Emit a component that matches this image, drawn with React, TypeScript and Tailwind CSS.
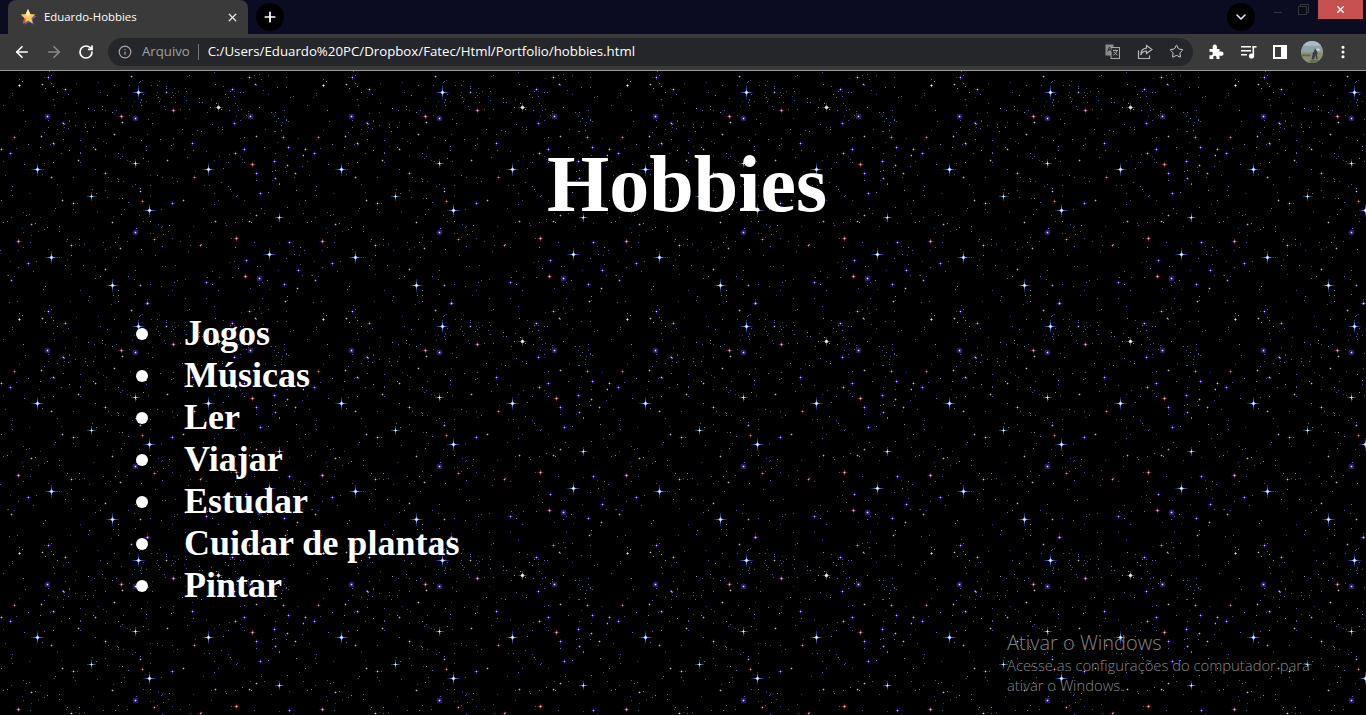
import React from "react";
import { X, Plus, ChevronDown, ArrowLeft, ArrowRight, RotateCw, Info, Star, MoreVertical } from "lucide-react";

type S = [number, number, string];
const stars: S[] = [
  [48,77,"p"],[131,76,"d"],[19,85,"c"],[42,84,"d"],[65,89,"p"],[138,92,"b"],[47,116,"h"],[121,116,"r"],[135,118,"h"],[63,123,"p"],[122,122,"d"],[114,134,"d"],[41,136,"d"],[14,137,"r2"],[53,143,"p"],[1,149,"p"],[10,153,"p"],[95,149,"d"],[78,160,"d"],[135,163,"x"],[37,169,"b"],[51,177,"d"],[105,173,"p"],
  [249,77,"p"],[255,84,"d"],[232,89,"p"],[166,92,"d"],[173,110,"r"],[218,107,"w"],[250,116,"h"],[234,123,"p"],[256,136,"d"],[283,137,"r2"],[192,143,"p"],[288,147,"p"],[244,149,"p"],[235,153,"p"],[303,155,"d"],[167,160,"d"],[274,161,"p"],[252,164,"r"],[287,165,"d"],[208,169,"b"],[295,173,"d"],[256,173,"p"],[275,178,"d"],[194,177,"r2"],
  [91,196,"x"],[62,200,"d"],[73,203,"p"],[142,201,"r2"],[140,191,"d"],[149,210,"b"],[31,224,"d"],[112,222,"d"],[135,232,"h"],[154,239,"r2"],[18,241,"r"],[71,245,"p"],[120,248,"d"],[51,257,"b"],[28,263,"p"],[105,269,"d"],[11,280,"d"],[112,285,"b"],[140,285,"d"],[147,303,"r"],
  [260,193,"p"],[172,203,"p"],[183,200,"d"],[256,215,"d"],[279,217,"x"],[215,221,"d"],[249,221,"d"],[236,238,"r"],[200,245,"r2"],[289,242,"p"],[269,254,"b"],[246,260,"p"],[298,270,"p"],[245,276,"r"],[259,278,"h"],[206,282,"p"],[284,284,"p"],[297,288,"d"],[285,301,"d"],
];

function makeDust() {
  let seed = 90210;
  const rnd = () => {
    seed = (seed * 1664525 + 1013904223) % 4294967296;
    return seed / 4294967296;
  };
  const cols = ["#4f5ca8", "#3f4a90", "#5f6cb8", "#38407c", "#4a5598", "#8288c0"];
  const out: { x: number; y: number; c: string }[] = [];
  for (let i = 0; i < 400; i++) {
    out.push({ x: Math.floor(rnd() * 304), y: Math.floor(rnd() * 234), c: cols[Math.floor(rnd() * cols.length)] });
  }
  const clusters = [[148, 22, 40, 24], [175, 25, 30, 20], [238, 35, 26, 30], [58, 55, 24, 12], [120, 100, 34, 30], [285, 50, 22, 22]];
  clusters.forEach(([cx, cy, w, h]) => {
    for (let i = 0; i < 9; i++) {
      out.push({ x: Math.floor(cx - w / 2 + rnd() * w), y: Math.floor(cy - h / 2 + rnd() * h), c: cols[Math.floor(rnd() * 4)] });
    }
  });
  return out;
}
const dust = makeDust();

function Cross({ x, y, layers, core }: { x: number; y: number; layers: [number, string][]; core: string }) {
  return (
    <g>
      {layers.map(([r, c], i) => (
        <g key={i} fill={c}>
          <rect x={x - r} y={y} width={2 * r + 1} height={1} />
          <rect x={x} y={y - r} width={1} height={2 * r + 1} />
        </g>
      ))}
      <rect x={x} y={y} width={1} height={1} fill={core} />
    </g>
  );
}

function StarShape({ x, y, t }: { x: number; y: number; t: string }) {
  if (t === "b")
    return (
      <g>
        <Cross x={x} y={y} layers={[[6, "#18286c"], [4, "#2c44a0"], [3, "#4c6cd0"]]} core="#fff" />
        <rect x={x - 1} y={y - 1} width={3} height={3} fill="#5f7cd8" />
        <Cross x={x} y={y} layers={[[2, "#7c9ce8"], [1, "#c8dcff"]]} core="#fff" />
      </g>
    );
  if (t === "x") return <Cross x={x} y={y} layers={[[4, "#1c3c60"], [2, "#46789c"], [1, "#88c0d8"]]} core="#e8ffff" />;
  if (t === "c") return <Cross x={x} y={y} layers={[[1, "#4c94c8"]]} core="#d8f8ff" />;
  if (t === "p") return <Cross x={x} y={y} layers={[[2, "#240c68"], [1, "#4c18b8"]]} core="#d8d0ff" />;
  if (t === "d") return (
    <g>
      <Cross x={x} y={y} layers={[[1, "#3c3044"]]} core="#c4b8c4" />
    </g>
  );
  if (t === "r2") return (
    <g>
      <Cross x={x} y={y} layers={[[2, "#3a0c14"], [1, "#642230"]]} core="#d8b8c0" />
    </g>
  );
  if (t === "r") return (
    <g>
      <Cross x={x} y={y} layers={[[3, "#380a10"], [2, "#5c1420"]]} core="#fff" />
      <rect x={x - 1} y={y - 1} width={3} height={3} fill="#401860" />
      <Cross x={x} y={y} layers={[[1, "#8c4c88"]]} core="#f0e0d8" />
    </g>
  );
  if (t === "h") return (
    <g>
      <rect x={x - 2} y={y - 2} width={5} height={5} fill="#281e60" />
      <Cross x={x} y={y} layers={[[3, "#181440"], [1, "#6058b0"]]} core="#e8e8ff" />
    </g>
  );
  return (
    <g>
      <Cross x={x} y={y} layers={[[4, "#3a352a"], [2, "#7c7664"]]} core="#fff" />
      <rect x={x - 1} y={y - 1} width={3} height={3} fill="#a8a28e" />
      <Cross x={x} y={y} layers={[[1, "#dcd6c8"]]} core="#fff" />
    </g>
  );
}

function Starfield() {
  return (
    <svg className="absolute inset-0 w-full h-full" shapeRendering="crispEdges" aria-hidden="true">
      <defs>
        <pattern id="sky" x="0" y="0" width="304" height="234" patternUnits="userSpaceOnUse">
          <rect width="304" height="234" fill="#000" />
          {dust.map((d, i) => (
            <rect key={i} x={d.x} y={d.y} width={1} height={1} fill={d.c} />
          ))}
          {stars.map(([x, y, t], i) => (
            <StarShape key={i} x={x} y={((y - 71) % 234 + 234) % 234} t={t} />
          ))}
        </pattern>
      </defs>
      <rect width="100%" height="100%" fill="url(#sky)" />
    </svg>
  );
}

function Favicon() {
  return (
    <svg width="18" height="18" viewBox="0 0 17 17" className="shrink-0">
      <path d="M9.500 2.500l2 4.600 5 .5-3.800 3.300 1.200 4.900-4.400-2.600-4.300 2.600 1.100-4.900L2.600 7.600l5-.5z" fill="#75609c" />
      <path d="M8.500 1l2 4.600 5 .5-3.800 3.300 1.200 4.900-4.400-2.600-4.300 2.600 1.100-4.900L1.600 6.100l5-.5z" fill="#f6cd55" />
      <path d="M8.500 1l2 4.600-2 3-2-3.400z" fill="#fdf0b0" />
      <path d="M3.500 14.800l1.300-5.400 1.500 1-.3 3.100z" fill="#d8503c" />
    </svg>
  );
}

function Translate() {
  return (
    <svg width="15" height="15" viewBox="0 0 15 15">
      <rect x="0.500" y="0.500" width="8" height="11" fill="#8a8b8c" />
      <rect x="6" y="3.500" width="8.500" height="11" fill="#2a2b2d" stroke="#a6a7a8" />
      <path d="M2.500 7.500l2-4.500 2 4.500M3.200 6h2.600" stroke="#2a2b2d" strokeWidth="1" fill="none" />
      <path d="M8 6.500h5M10.500 5.500v1M12 6.500c-.5 2.500-2 3.800-3.500 4.500M9 7.500c.7 1.700 2 3 3.500 3.500" stroke="#b0b1b2" fill="none" strokeWidth="0.900" />
    </svg>
  );
}

function Share() {
  return (
    <svg width="16" height="16" viewBox="0 0 16 16" fill="none" stroke="#b4b5b6" strokeWidth="1.200">
      <path d="M1.500 6.500v8h11v-3" />
      <path d="M9.500 1.500l5.500 4-5.500 4V7C6.500 7 4.800 8.500 3.800 11c0-4.200 2-6.500 5.700-6.800z" />
    </svg>
  );
}

function Puzzle() {
  return (
    <svg width="15" height="15" viewBox="0 0 15 15" fill="#fff">
      <path d="M0.500 5h3.300c-.6-3 .2-4.500 2-4.500s2.600 1.500 2 4.500h2.700v2.800c2.700-.7 4 .1 4 1.900s-1.300 2.500-4 1.900v3.400H7.400c.5-2.500-.2-3.300-1.500-3.300s-2 .8-1.500 3.300H.5v-3.800c2.500.5 3.300-.2 3.300-1.600S3 7.500.5 8z" />
    </svg>
  );
}

function MediaQueue() {
  return (
    <svg width="16" height="14" viewBox="0 0 16 14" fill="#fff">
      <rect x="0" y="1" width="10" height="1.500" />
      <rect x="0" y="5" width="10" height="1.500" />
      <rect x="0" y="9" width="6" height="1.500" />
      <rect x="11.500" y="1" width="1.600" height="10" />
      <rect x="11.500" y="1" width="4" height="1.600" />
      <circle cx="10.500" cy="11" r="2.600" />
    </svg>
  );
}

function Avatar() {
  return (
    <svg width="22" height="22" viewBox="0 0 23 23" className="rounded-full">
      <rect width="23" height="23" fill="#8fa2ab" />
      <rect y="12" width="23" height="11" fill="#8d8f6c" />
      <rect y="0" width="23" height="5" fill="#a9bac2" />
      <path d="M0 14h10v2H0z" fill="#5c6b4c" />
      <path d="M11 19l1.500-7 1-1 1-3 1.500 0 .5 3 1 2-1 1 1 5h-1.500l-1-4-1.500 4.500z" fill="#3a3f4c" />
      <path d="M15 8.500l3-1 2 2-2 1z" fill="#d8d8d8" />
      <rect x="9" y="20" width="14" height="3" fill="#6b6c50" />
    </svg>
  );
}

function Restore() {
  return (
    <svg width="11" height="11" viewBox="0 0 11 11" fill="none" stroke="#34343c" shapeRendering="crispEdges">
      <rect x="0.500" y="2.500" width="8" height="8" />
      <path d="M2.500 2.500v-2h8v8h-2" />
    </svg>
  );
}

const items = ["Jogos", "Músicas", "Ler", "Viajar", "Estudar", "Cuidar de plantas", "Pintar"];

export default function App() {
  return (
    <div className="w-[1366px] h-[715px] overflow-hidden flex flex-col bg-black font-['Open_Sans',sans-serif]">
      {/* tab strip */}
      <div className="h-[34px] bg-[#0b0b22] flex items-end pl-2 shrink-0">
        <div className="w-[240px] h-[34px] bg-[#3a3a3a] rounded-t-lg flex items-center pl-[11px] pr-[9px] gap-[7px]">
          <Favicon />
          <span className="flex-1 text-[11.400px] text-white whitespace-nowrap">Eduardo-Hobbies</span>
          <X size={13} strokeWidth={2.4} className="text-[#e4e4e4]" />
        </div>
        <div className="ml-2 w-7 h-7 mb-[3px] rounded-full bg-black flex items-center justify-center">
          <Plus size={16} strokeWidth={2.6} className="text-white" />
        </div>
        <div className="flex-1" />
        <div className="w-7 h-7 mb-[3px] rounded-full bg-black flex items-center justify-center mr-[19px]">
          <ChevronDown size={16} strokeWidth={2.4} className="text-[#e8e8e8]" />
        </div>
        <div className="self-start flex h-[19px] items-start">
          <div className="w-2 h-px bg-[#34343c] mt-[12px] mr-[16px]" />
          <div className="mt-1 mr-[9px]"><Restore /></div>
          <div className="w-[45px] h-[19px] bg-[#c75050] flex items-center justify-center mr-[3px]">
            <X size={11} strokeWidth={3} className="text-white" />
          </div>
        </div>
      </div>
      {/* toolbar */}
      <div className="h-[37px] bg-[#3a3a3a] border-b border-[#9a9a9a] flex items-center shrink-0 pl-[13px] pr-[14px] pb-px">
        <ArrowLeft size={18} strokeWidth={2.2} className="text-white" />
        <ArrowRight size={18} strokeWidth={2.2} className="text-[#8a8a8a] ml-[14px]" />
        <RotateCw size={16} strokeWidth={2.6} className="text-white ml-[15px]" />
        <div className="ml-[14px] w-[1085px] h-7 rounded-full bg-[#252629] flex items-center pl-[10px] pr-[9px]">
          <Info size={14} className="text-[#a8a9aa]" />
          <span className="ml-[10px] text-[13.200px] text-[#a0a1a2] whitespace-nowrap">Arquivo</span>
          <div className="ml-[8px] w-px h-4 bg-[#75767a]" />
          <span className="ml-[9px] text-[13.250px] text-white whitespace-nowrap">C:/Users/Eduardo%20PC/Dropbox/Fatec/Html/Portfolio/hobbies.html</span>
          <div className="flex-1" />
          <Translate />
          <div className="ml-[17px]"><Share /></div>
          <Star size={15} strokeWidth={1.6} className="ml-[16px] text-[#d0d1d2]" />
        </div>
        <div className="ml-[16px]"><Puzzle /></div>
        <div className="ml-[17px]"><MediaQueue /></div>
        <div className="ml-[16px] w-[14px] h-[14px] bg-white flex">
          <div className="w-[6px] h-[10px] mt-[2px] ml-[2px] bg-[#3a3a3a]" />
        </div>
        <div className="ml-[14px]"><Avatar /></div>
        <MoreVertical size={16} strokeWidth={2.6} className="ml-[12px] text-white" />
      </div>
      {/* page */}
      <main className="relative flex-1 overflow-hidden text-white font-['Liberation_Serif',serif] font-bold">
        <Starfield />
        <h1 className="relative text-[80px] leading-[92px] text-center pl-2 pt-[67px]">Hobbies</h1>
        <ul className="relative pl-[136px] mt-[82px] text-[36px] leading-[42px]">
          {items.map((t) => (
            <li key={t} className="flex items-center">
              <span className="w-3 h-3 rounded-full bg-white mr-[36px] mt-[2px] shrink-0" />
              <span>{t}</span>
            </li>
          ))}
        </ul>
        <div className="absolute left-[1007px] top-[559px] text-[#858585] font-['Open_Sans',sans-serif] font-light">
          <div className="text-[20px] leading-[25px]">Ativar o Windows</div>
          <div className="text-[14.800px] leading-[20px] w-[330px]">Acesse as configurações do computador para<br />ativar o Windows.</div>
        </div>
      </main>
    </div>
  );
}
